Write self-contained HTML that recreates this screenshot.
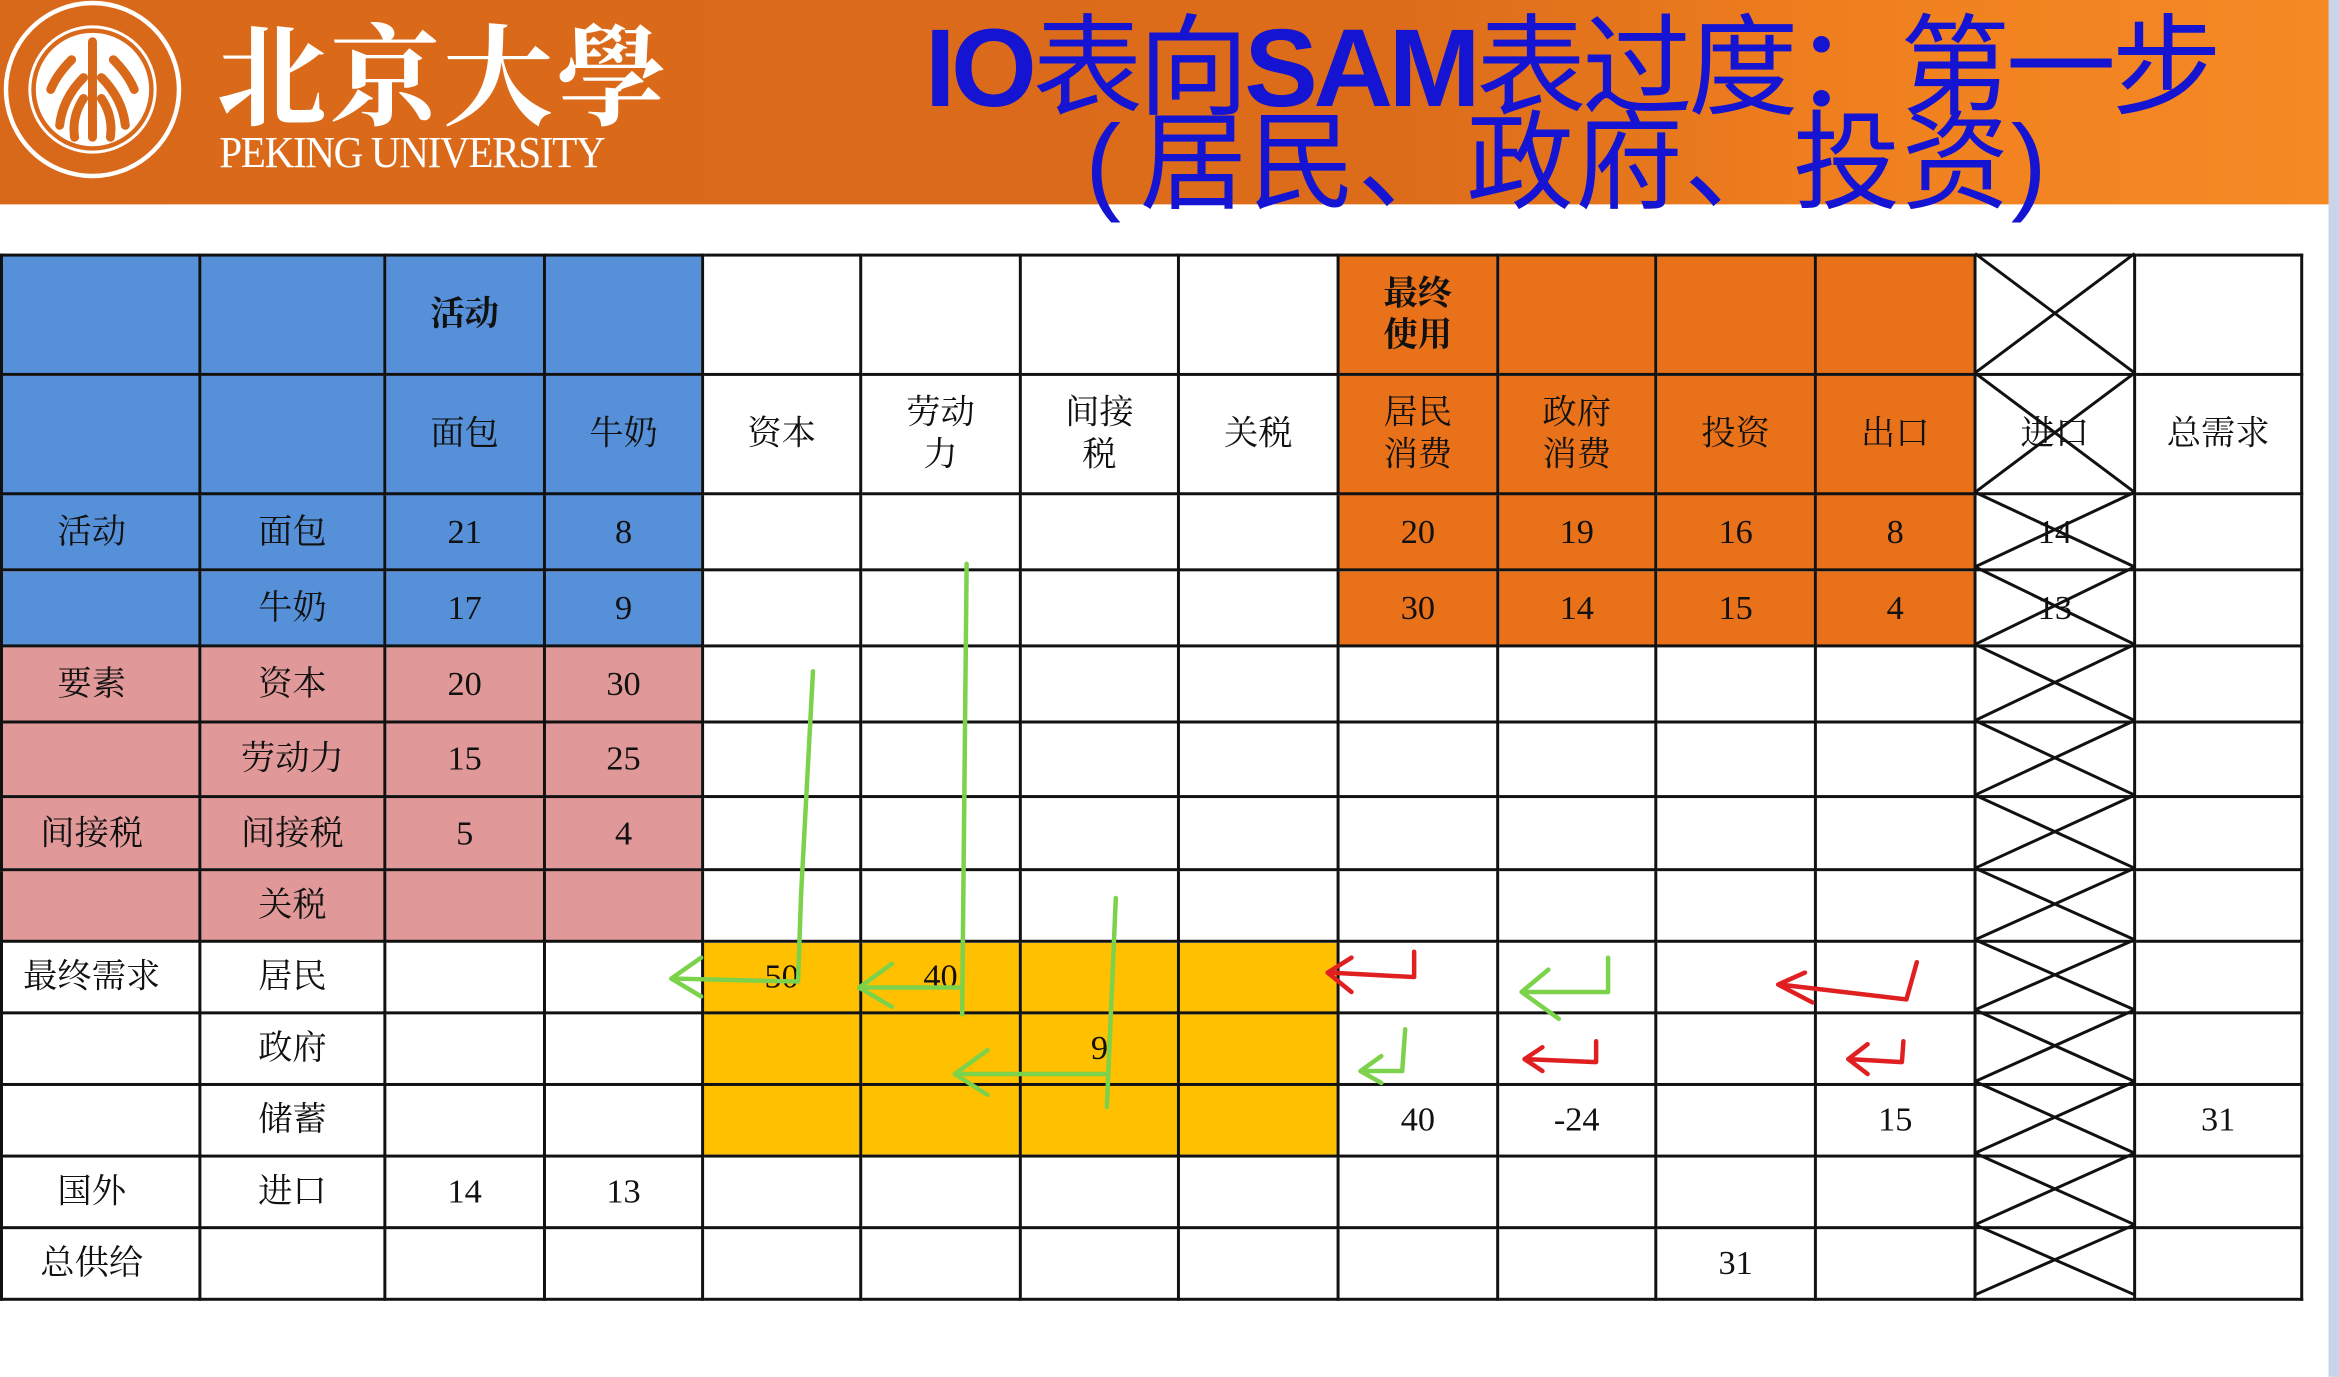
<!DOCTYPE html>
<html><head><meta charset="utf-8"><style>
html,body{margin:0;padding:0;width:2339px;height:1377px;overflow:hidden;background:#fff}
#s{position:absolute;left:0;top:0;width:1568px;height:923px;transform:scale(1.49171);transform-origin:0 0;background:#fff}
.hdr{position:absolute;left:0;top:0;width:1562px;height:137px;background:linear-gradient(90deg,#d9691a 0%,#dc6c1a 60%,#f0801e 80%,#f58a25 100%)}
.edge{position:absolute;left:1561px;top:0;width:7px;height:923px;background:#c8d4e8}
.t1,.t2{position:absolute;color:#1414d2;font-family:"Liberation Sans","Noto Sans CJK SC",sans-serif;white-space:nowrap}
.t1{left:620px;top:-14px;font-size:74px;letter-spacing:-3px}
.t2{left:716px;top:50px;font-size:72px;letter-spacing:1px}
.pp{display:inline-block;width:48px;text-align:center}
.cn{position:absolute;left:145px;top:-6px;font-size:74px;color:#fff;font-family:"Noto Serif CJK SC",serif;font-weight:bold;letter-spacing:2px}
.en{position:absolute;left:147px;top:86px;font-size:30px;color:#fff;font-family:"Liberation Serif",serif;letter-spacing:-1px;transform:scaleX(0.92);transform-origin:0 0}
table{position:absolute;left:0;top:170px;border-collapse:collapse;table-layout:fixed;font-family:"Liberation Serif","Noto Serif CJK SC",serif;font-size:23px;color:#111}
td{border:2px solid #111;padding:0;text-align:center;line-height:28px;overflow:hidden}
td:first-child{padding-right:12px}
.b{background:#5590d8}.p{background:#e09898}.o{background:#e8711a}.y{background:#ffc000}
.bo{font-weight:bold}
</style></head><body><div id="s">
<div class="hdr"></div>
<svg style="position:absolute;left:0;top:0" width="130" height="130" viewBox="0 0 130 130">
<circle cx="62" cy="60" r="58" fill="none" stroke="#fff" stroke-width="3"/>
<circle cx="62" cy="60" r="42" fill="none" stroke="#fff" stroke-width="2"/>
<circle cx="62" cy="60" r="38" fill="#fff"/>
<g stroke="#d9691a" stroke-width="6" fill="none" stroke-linecap="round">
<path d="M62 28 V92"/><path d="M48 40 Q38 50 34 60"/><path d="M76 40 Q86 50 90 60"/>
<path d="M56 52 Q42 66 40 84"/><path d="M68 52 Q82 66 84 84"/><path d="M56 66 Q48 78 50 92"/><path d="M68 66 Q76 78 74 92"/>
</g></svg>
<div class="cn">北京大學</div>
<div class="en">PEKING UNIVERSITY</div>
<div class="t1"><b>IO</b>表向<b>SAM</b>表过度：第一步</div>
<div class="t2"><span class="pp">(</span>居民、政府、投资)</div>
<div class="edge"></div>
<table>
<colgroup><col style="width:133px"><col style="width:124px"><col style="width:107px"><col style="width:106px"><col style="width:106px"><col style="width:107px"><col style="width:106px"><col style="width:107px"><col style="width:107px"><col style="width:106px"><col style="width:107px"><col style="width:107px"><col style="width:107px"><col style="width:112px"></colgroup>
<tr style="height:80px"><td class="b"></td><td class="b"></td><td class="b bo">活动</td><td class="b"></td><td></td><td></td><td></td><td></td><td class="o bo">最终<br>使用</td><td class="o"></td><td class="o"></td><td class="o"></td><td class="x"></td><td></td></tr>
<tr style="height:80px"><td class="b"></td><td class="b"></td><td class="b">面包</td><td class="b">牛奶</td><td>资本</td><td>劳动<br>力</td><td>间接<br>税</td><td>关税</td><td class="o">居民<br>消费</td><td class="o">政府<br>消费</td><td class="o">投资</td><td class="o">出口</td><td>进口</td><td>总需求</td></tr>
<tr style="height:51px"><td class="b">活动</td><td class="b">面包</td><td class="b">21</td><td class="b">8</td><td></td><td></td><td></td><td></td><td class="o">20</td><td class="o">19</td><td class="o">16</td><td class="o">8</td><td>14</td><td></td></tr>
<tr style="height:51px"><td class="b"></td><td class="b">牛奶</td><td class="b">17</td><td class="b">9</td><td></td><td></td><td></td><td></td><td class="o">30</td><td class="o">14</td><td class="o">15</td><td class="o">4</td><td>13</td><td></td></tr>
<tr style="height:51px"><td class="p">要素</td><td class="p">资本</td><td class="p">20</td><td class="p">30</td><td></td><td></td><td></td><td></td><td></td><td></td><td></td><td></td><td></td><td></td></tr>
<tr style="height:50px"><td class="p"></td><td class="p">劳动力</td><td class="p">15</td><td class="p">25</td><td></td><td></td><td></td><td></td><td></td><td></td><td></td><td></td><td></td><td></td></tr>
<tr style="height:49px"><td class="p">间接税</td><td class="p">间接税</td><td class="p">5</td><td class="p">4</td><td></td><td></td><td></td><td></td><td></td><td></td><td></td><td></td><td></td><td></td></tr>
<tr style="height:48px"><td class="p"></td><td class="p">关税</td><td class="p"></td><td class="p"></td><td></td><td></td><td></td><td></td><td></td><td></td><td></td><td></td><td></td><td></td></tr>
<tr style="height:48px"><td>最终需求</td><td>居民</td><td></td><td></td><td class="y">50</td><td class="y">40</td><td class="y"></td><td class="y"></td><td></td><td></td><td></td><td></td><td></td><td></td></tr>
<tr style="height:48px"><td></td><td>政府</td><td></td><td></td><td class="y"></td><td class="y"></td><td class="y">9</td><td class="y"></td><td></td><td></td><td></td><td></td><td></td><td></td></tr>
<tr style="height:48px"><td></td><td>储蓄</td><td></td><td></td><td class="y"></td><td class="y"></td><td class="y"></td><td class="y"></td><td>40</td><td>-24</td><td></td><td>15</td><td></td><td>31</td></tr>
<tr style="height:48px"><td>国外</td><td>进口</td><td>14</td><td>13</td><td></td><td></td><td></td><td></td><td></td><td></td><td></td><td></td><td></td><td></td></tr>
<tr style="height:48px"><td>总供给</td><td></td><td></td><td></td><td></td><td></td><td></td><td></td><td></td><td></td><td>31</td><td></td><td></td><td></td></tr>
</table>
<svg style="position:absolute;left:0;top:0" width="1568" height="923">
<g stroke="#111" stroke-width="2" fill="none">
<path d="M1324 170L1431 250M1431 170L1324 250M1324 250L1431 330M1431 250L1324 330M1324 330L1431 380M1431 330L1324 380M1324 380L1431 432M1431 380L1324 432M1324 432L1431 483M1431 432L1324 483M1324 483L1431 533M1431 483L1324 533M1324 533L1431 582M1431 533L1324 582M1324 582L1431 630M1431 582L1324 630M1324 630L1431 677M1431 630L1324 677M1324 677L1431 725M1431 677L1324 725M1324 725L1431 773M1431 725L1324 773M1324 773L1431 821M1431 773L1324 821M1324 821L1431 868M1431 821L1324 868"/>
</g>
<g stroke="#7cd24a" stroke-width="3" fill="none" stroke-linecap="round" stroke-linejoin="round">
<path d="M545 450L537 600L535 658L452 656M470 642L450 656L470 668"/>
<path d="M648 378L645 680M645 662L578 662M598 646L576 662L598 675"/>
<path d="M748 602L742 742M742 720L642 720M662 704L640 720L662 734"/>
<path d="M1078 642L1078 665L1022 665M1038 650L1020 665L1045 683"/>
<path d="M942 690L940 718L913 718M926 708L912 718L926 726"/>
</g>
<g stroke="#e02020" stroke-width="3" fill="none" stroke-linecap="round" stroke-linejoin="round">
<path d="M948 638L948 655L892 652M906 642L890 652L906 665"/>
<path d="M1070 698L1070 712L1023 710M1034 702L1022 710L1034 718"/>
<path d="M1285 645L1278 670L1193 660M1210 652L1192 660L1215 672"/>
<path d="M1276 698L1275 712L1240 710M1252 700L1239 710L1252 720"/>
</g>
</svg>
</div></body></html>
